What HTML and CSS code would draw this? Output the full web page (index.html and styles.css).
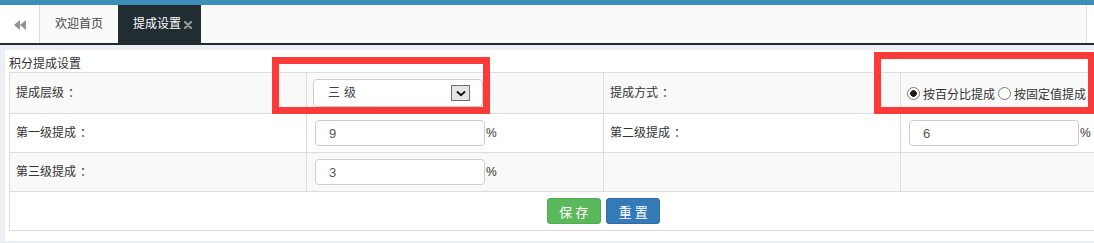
FILE: index.html
```html
<!DOCTYPE html>
<html lang="zh-CN">
<head>
    <meta charset="UTF-8">
    <title>提成设置</title>
    <link rel="stylesheet" href="styles.css">
</head>
<body>

    <!-- Kopfleiste -->
    <div class="topbar"></div>

    <!-- Tabs -->
    <div class="tabs">
        <a class="tab-btn tab-prev" href="#">
            <svg width="12" height="10" viewBox="0 0 12 10"><polygon points="6,0 0,5 6,10" fill="#8d9499"/><polygon points="12,0 6,5 12,10" fill="#8d9499"/></svg>
        </a>
        <div class="tab-list">
            <a class="tab" href="#">欢迎首页</a>
            <a class="tab active" href="#">提成设置
                <svg class="tab-close" width="8" height="8" viewBox="0 0 8 8"><path d="M1 1 L7 7 M7 1 L1 7" stroke="#8d9499" stroke-width="2.4" stroke-linecap="round"/></svg>
            </a>
        </div>
        <a class="tab-btn tab-next" href="#"></a>
    </div>

    <div class="content">
        <div class="panel">
            <div class="panel-title">积分提成设置</div>
            <table class="form-table">
                <colgroup>
                    <col class="col"><col class="col"><col class="col"><col class="col">
                </colgroup>
                <tr class="row-gray">
                    <td class="label">提成层级<span class="colon">：</span></td>
                    <td>
                        <div class="select-box">
                            <select class="select">
                                <option>三级</option>
                            </select>
                            <span class="select-arrow">
                                <svg width="10" height="7" viewBox="0 0 10 7"><path d="M1 1.5 L5 5.2 L9 1.5" stroke="#111" stroke-width="1.9" fill="none"/></svg>
                            </span>
                        </div>
                    </td>
                    <td class="label">提成方式<span class="colon">：</span></td>
                    <td>
                        <div class="radio-group">
                            <input type="radio" name="mode" class="radio" checked><span>按百分比提成</span>
                            <input type="radio" name="mode" class="radio"><span>按固定值提成</span>
                        </div>
                    </td>
                </tr>
                <tr>
                    <td class="label">第一级提成<span class="colon">：</span></td>
                    <td><input type="text" class="field" value="9"><span class="unit">%</span></td>
                    <td class="label">第二级提成<span class="colon">：</span></td>
                    <td><input type="text" class="field" value="6"><span class="unit">%</span></td>
                </tr>
                <tr class="row-gray">
                    <td class="label">第三级提成<span class="colon">：</span></td>
                    <td><input type="text" class="field" value="3"><span class="unit">%</span></td>
                    <td></td>
                    <td></td>
                </tr>
                <tr>
                    <td colspan="4" class="actions">
                        <button class="btn btn-save">保存</button>
                        <button class="btn btn-reset">重置</button>
                    </td>
                </tr>
            </table>
        </div>
    </div>

    <!-- rote Markierungen -->
    <div class="mark mark-level"></div>
    <div class="mark mark-mode"></div>

</body>
</html>
```

FILE: styles.css
```css
* {
    margin: 0;
    padding: 0;
    box-sizing: border-box;
}

html, body {
    height: 100%;
    overflow: hidden;
}

body {
    font-family: "Liberation Sans", "Noto Sans CJK SC", sans-serif;
    font-size: 12px;
    color: #333;
    background-color: #ecf0f5;
    position: relative;
}

.topbar {
    height: 5px;
    background-color: #3c8dbc;
}

/* Tab bar */
.tabs {
    display: flex;
    height: 40px;
    background-color: #fafafa;
    border-bottom: 2px solid #222d32;
}

.tab-btn {
    display: flex;
    align-items: center;
    justify-content: center;
    background-color: #fff;
}

.tab-prev {
    width: 40px;
    border-right: 1px solid #ddd;
    padding-top: 1px;
}

.tab-next {
    width: 8px;
    border-left: 1px solid #ddd;
}

.tab-list {
    flex: 1;
    display: flex;
}

.tab {
    display: flex;
    align-items: center;
    padding: 0 15px;
    line-height: 38px;
    color: #444;
    text-decoration: none;
}

.tab.active {
    background-color: #222d32;
    color: #fff;
    padding: 0 9px 0 15px;
}

.tab-close {
    margin-left: 3px;
    margin-top: 1px;
}

/* Content */
.content {
    padding: 5px 0 0 5px;
}

.panel {
    display: inline-block;
    background-color: #fff;
    padding: 0 4px 10px;
}

.panel-title {
    padding-top: 6px;
    line-height: 16px;
}

.form-table {
    border-collapse: collapse;
    table-layout: fixed;
    width: 1188px;
}

.form-table .col {
    width: 297px;
}

.form-table td {
    border: 1px solid #ddd;
    padding: 6px 8px;
    vertical-align: middle;
    line-height: 16px;
}

.form-table td.label {
    padding-left: 6px;
}

.colon {
    margin-left: 4px;
}

.row-gray {
    background-color: #f9f9f9;
}

/* Select */
.select-box {
    position: relative;
    display: inline-block;
    width: 170px;
    height: 28px;
    margin-left: -2px;
    vertical-align: middle;
}

.select {
    appearance: none;
    -webkit-appearance: none;
    width: 100%;
    height: 100%;
    border: 1px solid #ccc;
    border-radius: 4px;
    background-color: #fff;
    padding: 0 14px;
    font-family: "Liberation Sans", "Noto Sans CJK SC", sans-serif;
    font-size: 12px;
    letter-spacing: 4px;
    color: #444;
}

.select-arrow {
    position: absolute;
    right: 13px;
    top: 6px;
    width: 19px;
    height: 16px;
    border: 1px solid #707070;
    background-color: #e5e5e5;
    display: flex;
    align-items: center;
    justify-content: center;
    pointer-events: none;
}

/* Radios */
.radio-group {
    display: flex;
    align-items: center;
    margin-top: 4px;
}

.radio {
    appearance: none;
    -webkit-appearance: none;
    width: 13px;
    height: 13px;
    border: 1px solid #7a7a7a;
    border-radius: 50%;
    background-color: #fff;
    margin: -4px 3px 0 -2px;
}

.radio + span + .radio {
    margin-left: 3px;
}

.radio:checked {
    background: radial-gradient(circle, #1a1a1a 0, #1a1a1a 3px, #fff 3.6px);
}

/* Text fields */
.field {
    width: 170px;
    height: 26px;
    border: 1px solid #ccc;
    border-radius: 4px;
    padding: 0 13px;
    font-family: "Liberation Sans", "Noto Sans CJK SC", sans-serif;
    font-size: 13px;
    color: #555;
    vertical-align: middle;
    background-color: #fff;
}

.unit {
    vertical-align: middle;
    margin-left: 1px;
}

/* Buttons */
.actions {
    text-align: center;
}

.btn {
    width: 54px;
    height: 26px;
    border-radius: 3px;
    font-family: "Liberation Sans", "Noto Sans CJK SC", sans-serif;
    font-size: 13px;
    letter-spacing: 3px;
    text-indent: 3px;
    color: #fff;
    cursor: pointer;
    vertical-align: middle;
}

.btn + .btn {
    margin-left: 2px;
}

.btn-save {
    background-color: #5cb85c;
    border: 1px solid #4cae4c;
}

.btn-reset {
    background-color: #337ab7;
    border: 1px solid #2e6da4;
}

/* Markierungen */
.mark {
    position: absolute;
    border: 7px solid #fd3a3a;
}

.mark-level {
    left: 272px;
    top: 57px;
    width: 218px;
    height: 57px;
}

.mark-mode {
    left: 874px;
    top: 52px;
    width: 221px;
    height: 62px;
}
```
